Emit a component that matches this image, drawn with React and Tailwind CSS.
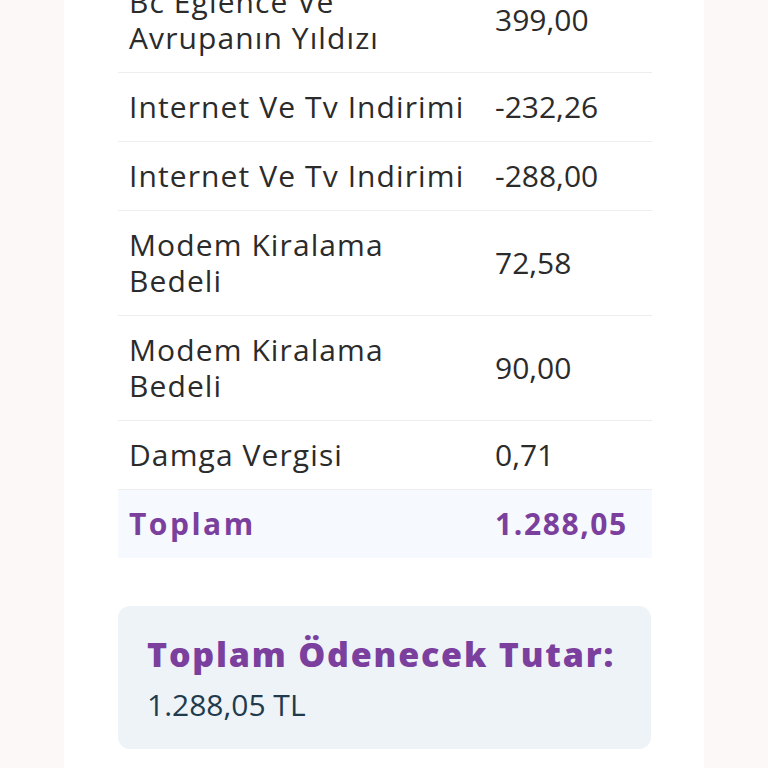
import React from 'react';

// Invoice line items with total summary
const items = [
  { name: "Bc Eglence Ve Avrupanın Yıldızı", amount: "399,00" },
  { name: "Internet Ve Tv Indirimi", amount: "-232,26" },
  { name: "Internet Ve Tv Indirimi", amount: "-288,00" },
  { name: "Modem Kiralama Bedeli", amount: "72,58" },
  { name: "Modem Kiralama Bedeli", amount: "90,00" },
  { name: "Damga Vergisi", amount: "0,71" },
];

export default function App() {
  return (
    <div
      className="h-[768px] overflow-hidden bg-[#fdf8f8] px-[64px]"
      style={{ fontFamily: '"Open Sans", "DejaVu Sans", sans-serif' }}
    >
      <div className="h-[820px] bg-white px-[54px]">
        {/* Line items */}
        <table className="-mt-[32px] w-[534px] table-fixed border-collapse text-[30px] leading-[36px] text-[#2b2b2b]">
          <tbody>
            {items.map((item, i) => (
              <tr key={i} className="border-b border-[#eeeeee]">
                <td className="w-[366px] py-4 pl-[11px] pr-4 align-middle tracking-[1.1px]">{item.name}</td>
                <td className="py-4 pl-[11px] align-middle">{item.amount}</td>
              </tr>
            ))}
            <tr className="bg-[#f6f9fd] font-bold text-[#7b3f9e]">
              <td className="py-4 pl-[11px] tracking-[2.5px]">Toplam</td>
              <td className="py-4 pl-[11px] tracking-[1.6px]">1.288,05</td>
            </tr>
          </tbody>
        </table>

        {/* Total payable */}
        <div className="mt-12 w-[533px] rounded-xl bg-[#eef3f8] px-[29px] pb-[24px] pt-[26px]">
          <div className="text-[34px] font-extrabold leading-[44px] tracking-[1.8px] text-[#7b3f9e]">
            Toplam Ödenecek Tutar:
          </div>
          <div className="mt-[9px] text-[30px] leading-[40px] text-[#1f3b4d]">1.288,05 TL</div>
        </div>
      </div>
    </div>
  );
}
